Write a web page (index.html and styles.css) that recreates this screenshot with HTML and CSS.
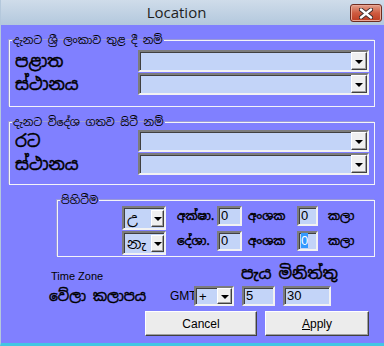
FILE: index.html
```html
<!DOCTYPE html>
<html lang="si">
<head>
  <meta charset="UTF-8" />
  <title>Location</title>
  <link rel="stylesheet" href="styles.css">
</head>
<body>

<div class="window">
  <div class="titlebar">
    <div class="title">Location</div>
    <div class="close">
      <svg width="14" height="11" viewBox="0 0 14 11">
        <path d="M2 1.5 L12 9.5 M12 1.5 L2 9.5" stroke="#3a2a2a" stroke-width="4.2" stroke-linecap="round"/>
        <path d="M2 1.5 L12 9.5 M12 1.5 L2 9.5" stroke="#ffffff" stroke-width="2.4" stroke-linecap="round"/>
      </svg>
    </div>
  </div>

  <div class="client">
    <!-- within Sri Lanka -->
    <fieldset class="group group-local">
      <legend>දැනට ශ්‍රී ලංකාව තුළ දී නම්</legend>
      <div class="row">
        <span class="label">පළාත</span>
        <div class="combo combo-wide"><span class="val"></span><span class="drop"></span></div>
      </div>
      <div class="row">
        <span class="label">ස්ථානය</span>
        <div class="combo combo-wide"><span class="val"></span><span class="drop"></span></div>
      </div>
    </fieldset>

    <!-- abroad -->
    <fieldset class="group group-abroad">
      <legend>දැනට විදේශ ගතව සිටී නම්</legend>
      <div class="row">
        <span class="label">රට</span>
        <div class="combo combo-wide"><span class="val"></span><span class="drop"></span></div>
      </div>
      <div class="row row-gap">
        <span class="label">ස්ථානය</span>
        <div class="combo combo-wide"><span class="val"></span><span class="drop"></span></div>
      </div>
    </fieldset>

    <!-- lat / long -->
    <fieldset class="group group-pos">
      <legend>පිහිටීම</legend>
      <div class="pos-grid">
        <div class="combo combo-dir"><span class="val">උ</span><span class="drop"></span></div>
        <span class="pos-lbl lbl-axis">අක්ෂා.</span>
        <div class="field field-deg">0</div>
        <span class="pos-lbl lbl-deg">අංශක</span>
        <div class="field field-min">0</div>
        <span class="pos-lbl lbl-min">කලා</span>

        <div class="combo combo-dir"><span class="val">නැ</span><span class="drop"></span></div>
        <span class="pos-lbl lbl-axis">දේශා.</span>
        <div class="field field-deg">0</div>
        <span class="pos-lbl lbl-deg">අංශක</span>
        <div class="field field-min"><span class="selected">0</span></div>
        <span class="pos-lbl lbl-min">කලා</span>
      </div>
    </fieldset>

    <div class="tz">
      <div class="tz-head">
        <span class="tz-en">Time Zone</span>
        <span class="tz-unit">පැය</span>
        <span class="tz-unit">මිනිත්තු</span>
      </div>
      <div class="tz-row">
        <span class="tz-label">වේලා කලාපය</span>
        <span class="gmt">GMT</span>
        <div class="combo combo-sign"><span class="val">+</span><span class="drop"></span></div>
        <div class="field field-hour">5</div>
        <div class="field field-minute">30</div>
      </div>
      <div class="actions">
        <button class="btn btn-cancel">Cancel</button>
        <button class="btn btn-apply"><u>A</u>pply</button>
      </div>
    </div>
  </div>
</div>

</body>
</html>
```

FILE: styles.css
```css
/* --- Base --- */
body {
  margin: 0;
  background: #8080ff;
  font-family: "Noto Sans Sinhala", "Iskoola Pota", "Noto Sans", sans-serif;
}

.window {
  width: 384px;
  height: 346px;
  box-sizing: border-box;
  border-left: 1px solid #b4c8dc;
  border-bottom: 3px solid #42c6e2;
  display: flex;
  flex-direction: column;
  overflow: hidden;
}

/* --- Title bar --- */
.titlebar {
  height: 25px;
  flex: none;
  display: flex;
  align-items: flex-start;
  background: linear-gradient(#cfdcea, #b3c8dd);
}

.title {
  flex: 1;
  text-align: center;
  font-family: "Open Sans", "Noto Sans", sans-serif;
  font-size: 15px;
  line-height: 24px;
  color: #1e1e1e;
  padding-left: 2px;
}

.close {
  width: 30px;
  height: 16px;
  margin: 4px 2px 0 0;
  border: 1px solid #6e2c20;
  border-radius: 3px;
  background: linear-gradient(#e2a08c, #cf5b40 50%, #bd3d22);
  box-shadow: inset 0 0 0 1px #eaa896;
  display: flex;
  align-items: center;
  justify-content: center;
}

/* --- Client area --- */
.client {
  flex: 1;
  background: #8080ff;
  padding: 0 9px 0 8px;
}

.group {
  margin: 0;
  border: 1px solid #f4f4f8;
  box-shadow: -1px -1px 0 #9a9ad8;
  padding: 0 5px 0 5px;
  min-width: 0;
}

.group legend {
  font-size: 11px;
  line-height: 14px;
  color: #000;
  padding: 0 1px;
  margin-left: -3px;
}

.group-local {
  margin-top: 8px;
  padding-top: 3px;
  padding-bottom: 10px;
}

.group-abroad {
  margin-top: 8px;
  padding-top: 1px;
  padding-bottom: 8px;
}

.group-pos {
  margin: 8px 0 0 48px;
  padding: 0 0 1px 0;
}

.group-pos legend {
  margin-left: 2px;
}

.row {
  display: flex;
  align-items: center;
  height: 22px;
  margin-bottom: 1px;
}

.row-gap {
  margin-top: 1px;
}

/* thick legacy-font look: regular weight with a light stroke */
.label,
.pos-lbl,
.tz-unit,
.tz-label {
  color: #000;
  -webkit-text-stroke: 0.45px #000;
}

.label {
  width: 123px;
  font-size: 17px;
}

/* --- Combo boxes --- */
.combo {
  box-sizing: border-box;
  height: 22px;
  display: flex;
  align-items: center;
  background: #c3d4f8;
  border: 2px solid;
  border-color: #7c7c7c #f2f2f2 #f2f2f2 #7c7c7c;
  box-shadow: inset 1px 1px 0 #404040;
}

.combo .val {
  flex: 1;
  padding-left: 3px;
  font-size: 15px;
  color: #000;
}

.combo .drop {
  box-sizing: border-box;
  width: 16px;
  height: 18px;
  background: #f0f0f0;
  border: 1px solid;
  border-color: #ffffff #404040 #404040 #ffffff;
  box-shadow: inset -1px -1px 0 #a0a0a0;
  display: flex;
  align-items: center;
  justify-content: center;
}

.combo .drop::after {
  content: "";
  border-left: 4px solid transparent;
  border-right: 4px solid transparent;
  border-top: 4px solid #000;
  margin-top: 1px;
}

.combo-wide {
  width: 231px;
}

.combo-dir {
  width: 44px;
  height: 24px;
}

.combo-dir .drop {
  width: 13px;
  height: 17px;
}

.combo-sign {
  width: 40px;
  height: 20px;
}

.combo-sign .drop {
  width: 15px;
  height: 16px;
}

.combo-sign .val {
  font-family: "Liberation Sans", sans-serif;
  font-size: 13px;
}

/* --- Text fields --- */
.field {
  box-sizing: border-box;
  height: 20px;
  background: #c3d4f8;
  border: 2px solid;
  border-color: #7c7c7c #f2f2f2 #f2f2f2 #7c7c7c;
  box-shadow: inset 1px 1px 0 #404040;
  font-family: "Liberation Sans", sans-serif;
  font-size: 13px;
  line-height: 16px;
  padding-left: 2px;
  color: #000;
}

.field .selected {
  background: #3399ff;
  color: #fff;
}

/* --- Position grid --- */
.pos-grid {
  display: grid;
  grid-template-columns: 44px 51px 25px 55px 21px auto;
  grid-auto-rows: 24px;
  row-gap: 1px;
  padding-left: 64px;
  margin-top: -1px;
}

.pos-grid .field {
  align-self: start;
}

.pos-lbl {
  font-size: 12px;
  line-height: 20px;
}

.lbl-axis {
  padding-left: 11px;
}

.lbl-deg {
  padding-left: 6px;
}

.lbl-min {
  padding-left: 10px;
}

/* --- Time zone --- */
.tz {
  padding-left: 40px;
}

.tz-head {
  display: flex;
  align-items: flex-end;
  height: 24px;
  margin-top: 4px;
}

.tz-en {
  width: 190px;
  padding-left: 2px;
  font-family: "Liberation Sans", sans-serif;
  font-size: 11px;
  line-height: 13px;
  color: #000;
  margin-bottom: 2px;
}

.tz-unit {
  font-size: 16px;
  line-height: 22px;
  margin-right: 7px;
}

.tz-row {
  display: flex;
  align-items: center;
  height: 20px;
  margin-top: 1px;
}

.tz-label {
  width: 121px;
  font-size: 14px;
}

.gmt {
  width: 24px;
  font-family: "Liberation Sans", sans-serif;
  font-size: 12px;
  color: #000;
}

.field-hour {
  width: 33px;
  margin-left: 8px;
}

.field-minute {
  width: 48px;
  margin-left: 8px;
}

/* --- Buttons --- */
.actions {
  display: flex;
  gap: 8px;
  margin-top: 5px;
  padding-left: 96px;
}

.btn {
  height: 25px;
  background: #ececec;
  border: 1px solid;
  border-color: #ffffff #404040 #404040 #ffffff;
  box-shadow: inset -1px -1px 0 #a0a0a0;
  font-family: "Liberation Sans", sans-serif;
  font-size: 12px;
  color: #000;
  padding: 0;
}

.btn-cancel {
  width: 112px;
}

.btn-apply {
  width: 104px;
}
```
